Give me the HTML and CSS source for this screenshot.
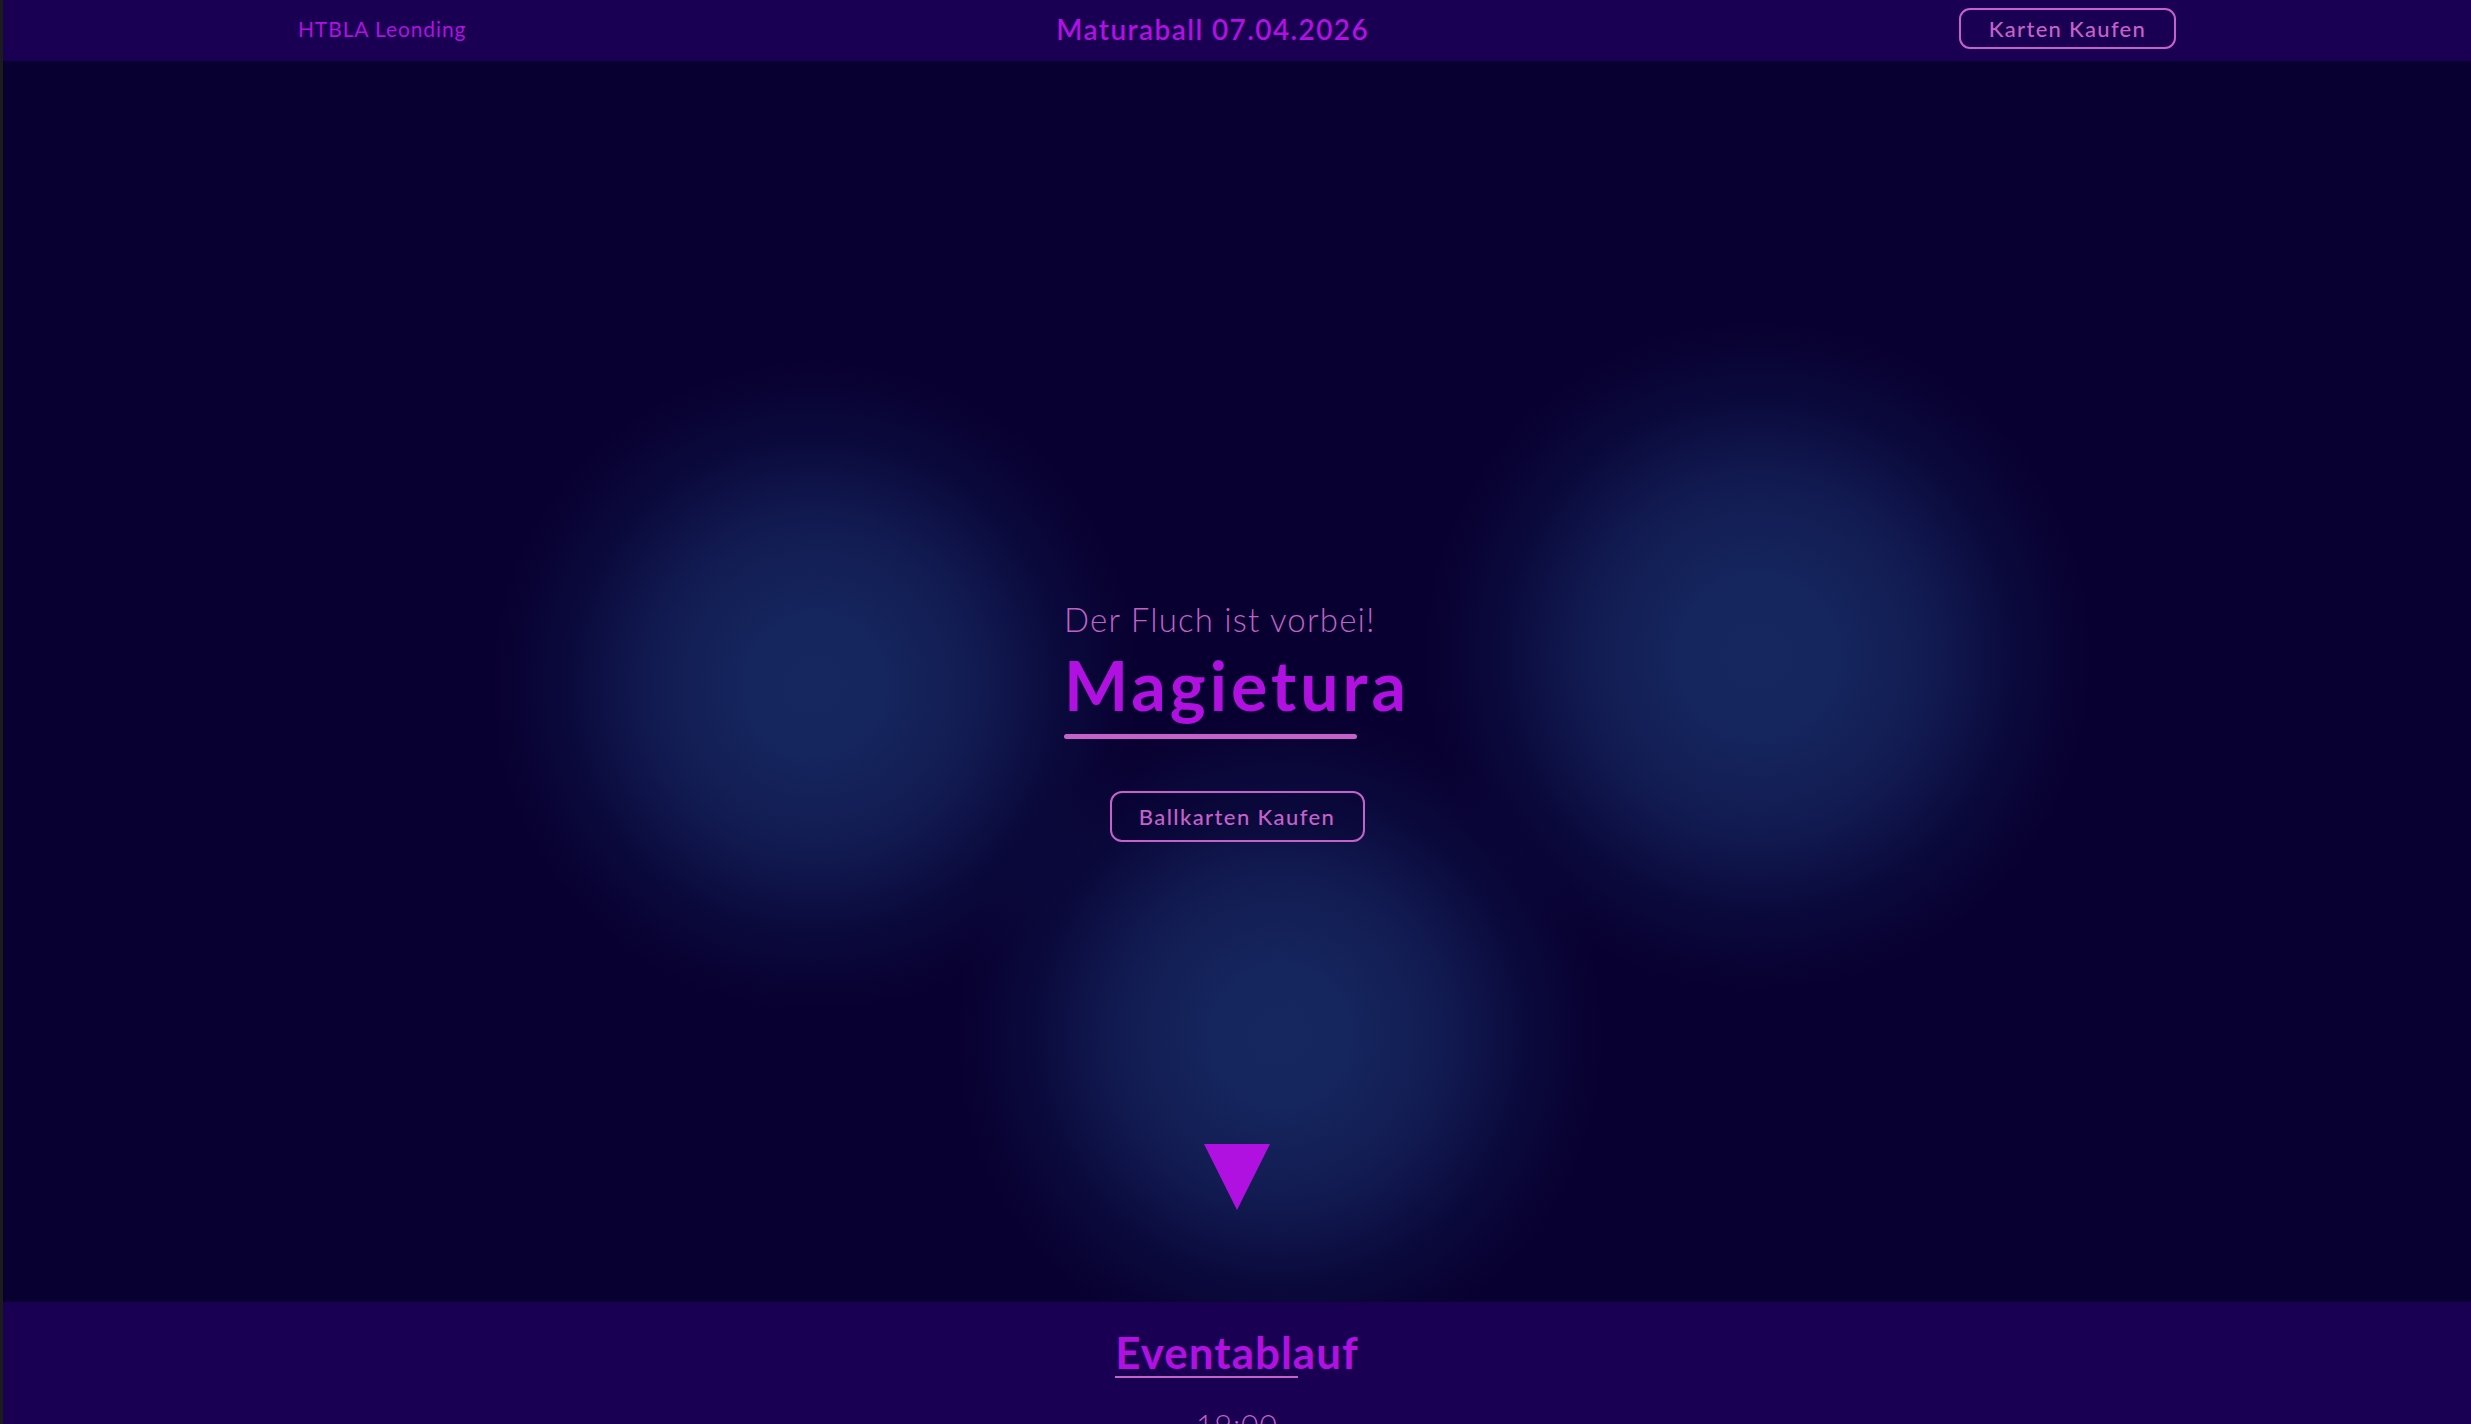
FILE: index.html
```html
<!DOCTYPE html>
<html lang="de">
<head>
<meta charset="utf-8">
<title>Maturaball 2026 – Magietura</title>
<link rel="stylesheet" href="styles.css">
</head>
<body>
<div class="page">
  <header class="topbar">
    <a class="brand" href="#">HTBLA Leonding</a>
    <div class="event-title">Maturaball 07.04.2026</div>
    <a class="btn btn-small" href="#">Karten Kaufen</a>
  </header>

  <section class="hero">
    <div class="hero-text">
      <p class="subtitle">Der Fluch ist vorbei!</p>
      <h1 class="title">Magietura</h1>
      <div class="title-bar"></div>
    </div>
    <a class="btn btn-large" href="#">Ballkarten Kaufen</a>
    <div class="arrow-down"></div>
  </section>

  <section class="schedule">
    <div class="section-head">
      <h2 class="section-title">Eventablauf</h2>
      <div class="section-bar"></div>
    </div>
    <p class="time">19:00</p>
  </section>
</div>
</body>
</html>
```

FILE: styles.css
```css
html {
  scrollbar-width: none;
}

body {
  margin: 0;
  background: #1c1c1c;
  font-family: "Lato", "Open Sans", sans-serif;
  overflow: hidden;
}

.page {
  margin-left: 3px;
}

a {
  text-decoration: none;
}

.topbar {
  height: 61px;
  box-sizing: border-box;
  padding-bottom: 4px;
  background: #1a0052;
  display: flex;
  justify-content: space-around;
  align-items: center;
}

.brand {
  color: #b010e0;
  font-size: 21px;
  letter-spacing: 0.9px;
}

.event-title {
  color: #b010e0;
  font-size: 28px;
  font-weight: 600;
  letter-spacing: 1.4px;
}

.btn {
  display: flex;
  align-items: center;
  justify-content: center;
  box-sizing: border-box;
  border: 2px solid #c462c9;
  color: #c462c9;
  font-weight: 500;
}

.btn-small {
  width: 217px;
  height: 41px;
  border-radius: 11px;
  font-size: 22px;
  letter-spacing: 1.3px;
}

.hero {
  height: 1241px;
  box-sizing: border-box;
  padding-top: 538px;
  display: flex;
  flex-direction: column;
  align-items: center;
  background-color: #080030;
  background-image:
    radial-gradient(circle at 812px 625px, #16275f 0, #15255d 70px, rgba(21, 37, 93, 0.75) 160px, rgba(16, 28, 85, 0.35) 245px, rgba(8, 0, 48, 0) 325px),
    radial-gradient(circle at 1755px 595px, #16275f 0, #15255d 80px, rgba(21, 37, 93, 0.75) 170px, rgba(16, 28, 85, 0.35) 255px, rgba(8, 0, 48, 0) 335px),
    radial-gradient(circle at 1277px 975px, #16275f 0, #15255d 70px, rgba(21, 37, 93, 0.75) 160px, rgba(16, 28, 85, 0.35) 245px, rgba(8, 0, 48, 0) 325px);
}

.hero-text {
  display: flex;
  flex-direction: column;
  align-items: flex-start;
}

.subtitle {
  margin: 0;
  color: #bf62c6;
  font-size: 33px;
  font-weight: 300;
  line-height: 40px;
  letter-spacing: 1.2px;
}

.title {
  margin: 6px 0 0;
  color: #b010e0;
  font-size: 68px;
  font-weight: 700;
  line-height: 80px;
  letter-spacing: 4px;
}

.title-bar {
  width: 293px;
  height: 5px;
  margin-top: 9px;
  border-radius: 3px;
  background: #c462c9;
}

.btn-large {
  width: 255px;
  height: 51px;
  margin-top: 52px;
  border-radius: 12px;
  font-size: 22px;
  letter-spacing: 1.4px;
  background: rgba(8, 0, 48, 0.35);
}

.arrow-down {
  margin-top: 302px;
  width: 0;
  height: 0;
  border-left: 33px solid transparent;
  border-right: 33px solid transparent;
  border-top: 66px solid #b010e0;
}

.schedule {
  background: #1a0052;
  padding-top: 24px;
  display: flex;
  flex-direction: column;
  align-items: center;
  min-height: 400px;
}

.section-head {
  display: flex;
  flex-direction: column;
  align-items: flex-start;
}

.section-title {
  margin: 0;
  color: #b010e0;
  font-size: 44px;
  font-weight: 700;
  line-height: 52px;
  letter-spacing: 1px;
}

.section-bar {
  width: 183px;
  height: 2px;
  margin-top: -2px;
  background: #c462c9;
}

.time {
  margin: 28px 0 0;
  color: #bf62c6;
  font-size: 30px;
  font-weight: 300;
  letter-spacing: 1px;
}
```
